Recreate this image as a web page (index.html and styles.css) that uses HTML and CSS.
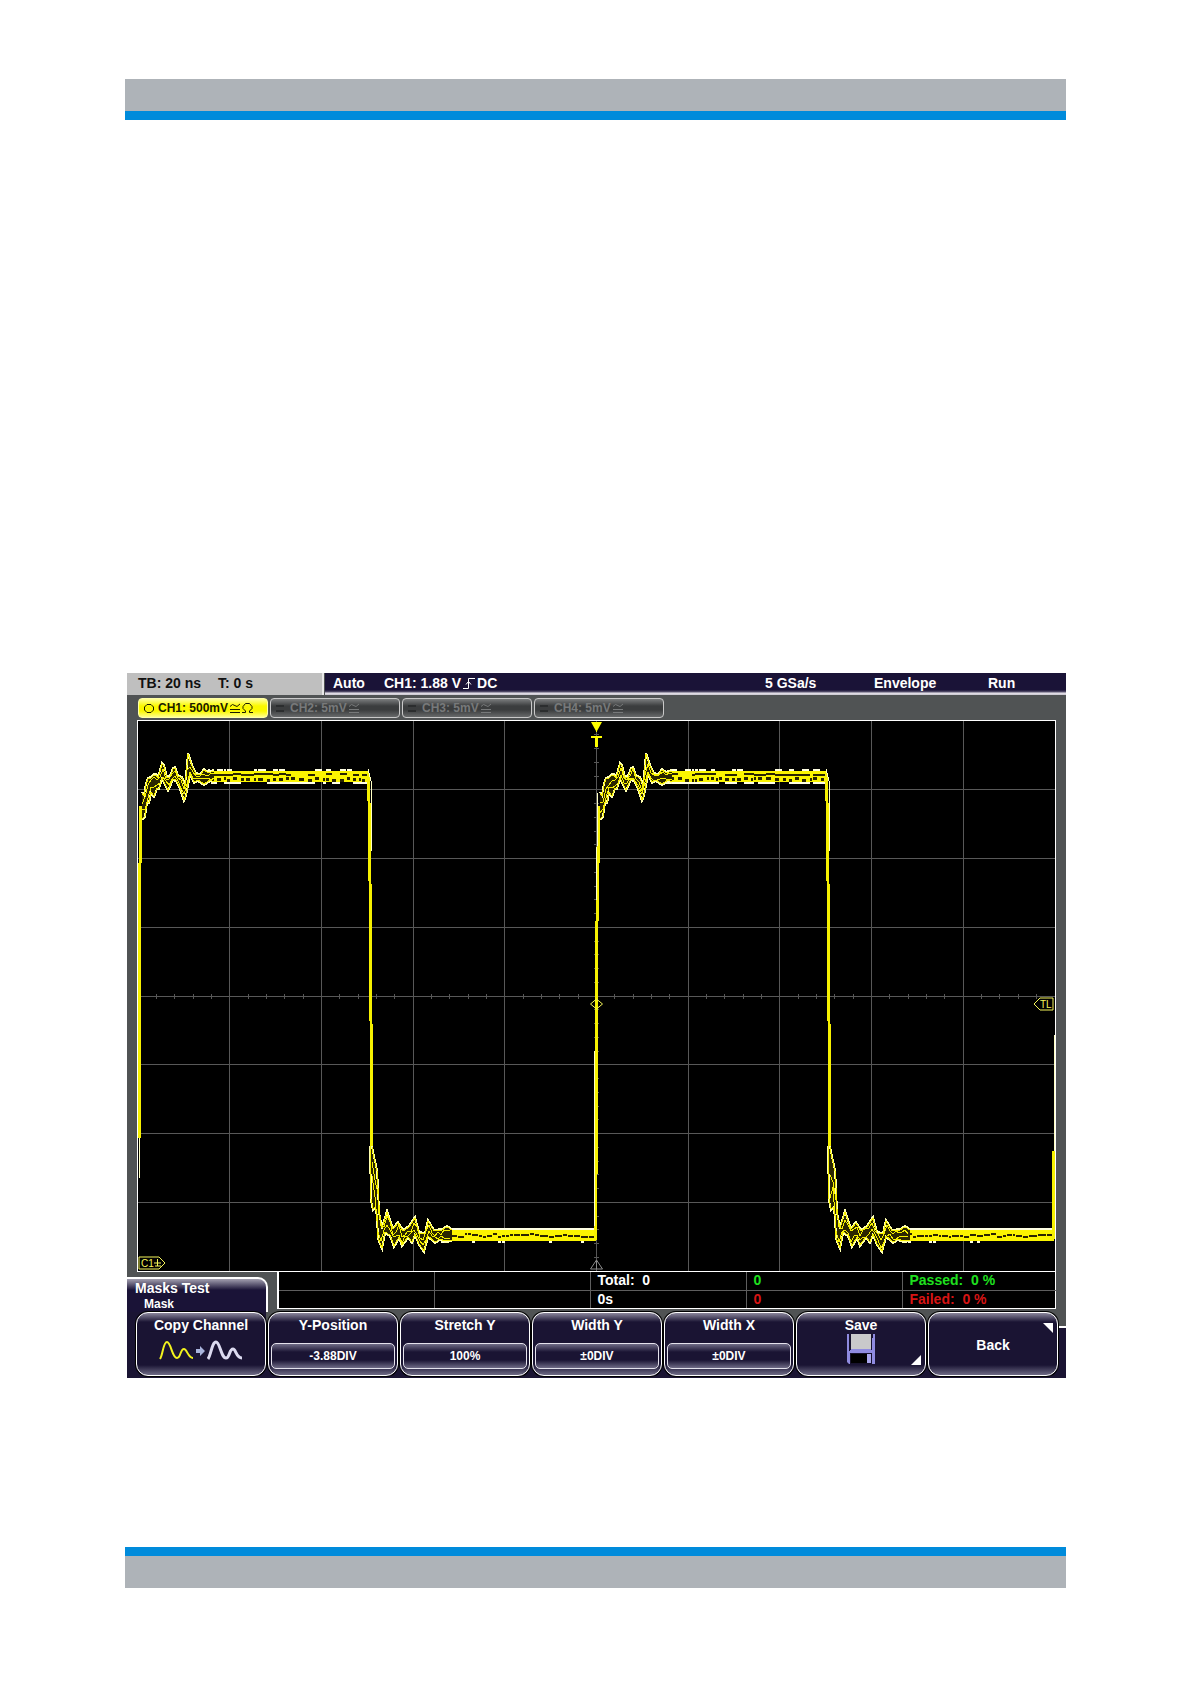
FILE: index.html
```html
<!DOCTYPE html>
<html lang="en">
  <head>
    <meta charset="UTF-8" />
    <meta name="viewport" content="width=device-width, initial-scale=1.0" />
    <title>Mask Test</title>
    <link rel="stylesheet" href="styles.css">
  </head>
  <body>
    <header class="band band-top"></header>

    <main class="scope">
      <!-- Status line -->
      <div class="status">
        <div class="timebase"><span>TB: 20 ns</span><span>T: 0 s</span></div>
        <div class="acquisition">
          <span>Auto</span>
          <span class="trigger">CH1: 1.88 V
            <svg width="12" height="11" viewBox="0 0 12 11"><path d="M0 10.500H5.500V.5H12M3 6.500l2.500-3 2.500 3" /></svg>
            DC</span>
          <span>5 GSa/s</span>
          <span>Envelope</span>
          <span>Run</span>
        </div>
      </div>

      <!-- Channel buttons -->
      <div class="channels">
        <button class="channel active">
          <svg width="10" height="9" viewBox="0 0 10 9"><path d="M3 .5h4l2.500 2.500v3L7 8.500H3L.5 6V3z" /></svg>
          <span>CH1: 500mV</span>
          <svg width="10" height="10" viewBox="0 0 10 10"><path d="M0 3.500L2.500 1.500 7 3.500 10 1M0 6.500h10M0 9.500h10" /></svg>
          <svg width="11" height="10" viewBox="0 0 11 10"><path d="M0 9.500h3.500V8L1 5.500v-2l2.500-3h4l2.500 3v2L7.500 8v1.500H11" /></svg>
        </button>
        <button class="channel">
          <svg class="off" width="8" height="7" viewBox="0 0 8 7"><path d="M0 1h8M0 6h8" /></svg>
          <span>CH2: 5mV</span>
          <svg width="10" height="10" viewBox="0 0 10 10"><path d="M0 3.500L2.500 1.500 7 3.500 10 1M0 6.500h10M0 9.500h10" /></svg>
        </button>
        <button class="channel">
          <svg class="off" width="8" height="7" viewBox="0 0 8 7"><path d="M0 1h8M0 6h8" /></svg>
          <span>CH3: 5mV</span>
          <svg width="10" height="10" viewBox="0 0 10 10"><path d="M0 3.500L2.500 1.500 7 3.500 10 1M0 6.500h10M0 9.500h10" /></svg>
        </button>
        <button class="channel">
          <svg class="off" width="8" height="7" viewBox="0 0 8 7"><path d="M0 1h8M0 6h8" /></svg>
          <span>CH4: 5mV</span>
          <svg width="10" height="10" viewBox="0 0 10 10"><path d="M0 3.500L2.500 1.500 7 3.500 10 1M0 6.500h10M0 9.500h10" /></svg>
        </button>
      </div>

      <!-- Waveform display -->
      <div class="display">
        <svg class="plot" viewBox="0 0 917 550">
          <g id="grid" shape-rendering="crispEdges"></g>
          <path class="zero" d="M458.500 539l6 9h-12zM458.500 539v9" />
          <g id="wave" shape-rendering="crispEdges"></g>
          <path class="mark-fill" d="M453 1h11l-5 9v1h-1v-1zM453 15h11v2h-4v9h-3v-9h-4z" />
          <path class="mark" d="M452.500 283l6-5 6 5-6 5z" />
          <path class="mark" d="M896 283l6-6h13v12h-13z" />
          <text class="mark-text" x="902" y="287">TL</text>
          <path class="mark" d="M1 536h20l6 6-6 6H1zM19.500 538v7M16 542h7M17 545h6" />
          <text class="mark-text" x="3" y="546">C1</text>
        </svg>
      </div>

      <!-- Mask statistics -->
      <div class="info">
        <div class="menu-title">
          <p>Masks Test</p>
          <p class="sub">Mask</p>
        </div>
        <table>
          <colgroup>
            <col class="wide" />
            <col class="wide" />
            <col class="wide" />
            <col class="wide" />
            <col />
          </colgroup>
          <tbody>
            <tr>
              <td></td>
              <td></td>
              <td class="first">Total:&nbsp; 0</td>
              <td class="passed">0</td>
              <td class="passed">Passed:&nbsp; 0 %</td>
            </tr>
            <tr>
              <td></td>
              <td></td>
              <td class="first">0s</td>
              <td class="failed">0</td>
              <td class="failed">Failed:&nbsp; 0 %</td>
            </tr>
          </tbody>
        </table>
      </div>

      <!-- Softkeys -->
      <div class="menu">
        <button class="softkey">
          <span>Copy Channel</span>
          <svg class="copy" width="84" height="22" viewBox="0 0 84 22">
            <path class="source" d="M1 19C4 15 4 2 8 2s5 16 10 16c4 0 3-9 7-9 3 0 4 9 9 9" />
            <path class="arrow" d="M37 9h4V6l5 5-5 5v-3h-4z" />
            <path class="target" d="M49 19C52 15 53 2 57 2s5 16 10 16c4 0 3-9 7-9 3 0 3 9 9 9" />
          </svg>
        </button>
        <button class="softkey"><span>Y-Position</span><span class="value">-3.88DIV</span></button>
        <button class="softkey"><span>Stretch Y</span><span class="value">100%</span></button>
        <button class="softkey"><span>Width Y</span><span class="value">±0DIV</span></button>
        <button class="softkey"><span>Width X</span><span class="value">±0DIV</span></button>
        <button class="softkey">
          <span>Save</span>
          <svg class="disk" width="28" height="30" viewBox="0 0 28 30">
            <path fill="#8f8be0" d="M0 0h28v30H2l-2-2z" />
            <path fill="#17122e" d="M2 0h2v17H2zM25 0h1v4h-1zM24 0h1v17h-1zM3 19h22v11H3z" />
            <path fill="#c9c9cb" d="M4 0h20v15H4z" />
            <path fill="#8f8be0" d="M3 16h22v3H3z" />
            <path fill="#000" d="M4 20h16v9H4z" />
            <path fill="#a9a6ee" d="M20 20h4v9h-4z" />
          </svg>
          <i class="corner bottom"></i>
        </button>
        <button class="softkey back"><span>Back</span><i class="corner top"></i></button>
      </div>
    </main>

    <footer class="band band-bottom"></footer>
    <script src="wave.js"></script>
  </body>
</html>
```
FILE: styles.css
```css
* {
  box-sizing: border-box;
}
body {
  margin: 0;
  padding: 79px 125px 96px;
  background-color: #fff;
  font-family: "Liberation Sans", Arial, sans-serif;
  font-size: 14px;
  font-weight: bold;
  line-height: 16px;
  color: #fff;
}
p {
  margin: 0;
}
button {
  margin: 0;
  padding: 0;
  font: inherit;
  color: inherit;
}
svg {
  display: block;
  fill: none;
}
.band {
  height: 41px;
  background-color: #aeb3b8;
}
.band-top {
  border-bottom: 9px solid #008bdb;
}
.band-bottom {
  border-top: 9px solid #008bdb;
}
.scope {
  margin: 553px 0 169px 2px;
  background-color: #505354;
}

/* status line */
.status {
  display: flex;
  height: 22px;
  gap: 1px;
}
.timebase {
  display: flex;
  align-items: center;
  gap: 17px;
  width: 197px;
  padding: 0 0 2px 11px;
  background-color: #bfbfbf;
  border-right: 2px solid #e8e8e8;
  color: #111;
}
.acquisition {
  flex: 1;
  display: grid;
  grid-template-columns: 51px 1fr 109px 114px 78px;
  align-items: center;
  padding: 0 0 2px 8px;
  background: linear-gradient(#1a1337 17px, #5b5571 19px, #e6e2ea 20px, #c9c6d0 22px);
}
.trigger {
  display: flex;
  align-items: center;
  gap: 2px;
}
.trigger svg {
  stroke: #fff;
}

/* channels */
.channels {
  display: flex;
  gap: 2px;
  padding: 3px 11px 2px;
}
.channel {
  display: flex;
  align-items: center;
  gap: 2px;
  width: 130px;
  height: 20px;
  padding-left: 5px;
  border: 1px solid #c9c9c9;
  border-radius: 4px;
  background: linear-gradient(#7b7d7e, #3b3d3e 7px, #3b3d3e 11px, #686a6b);
  color: #77797a;
  font-size: 12px;
}
.channel span {
  margin-left: 2px;
}
.channel svg {
  stroke: currentColor;
}
.channel .off {
  margin-right: 2px;
  stroke: #2b2d2e;
  stroke-width: 2;
}
.channel.active {
  border-color: #ffffa8;
  background: linear-gradient(#ffff9c, #fbf800 7px, #fbf800 12px, #ffff8a);
  color: #1a1a00;
}

/* display */
.display {
  margin: 0 10px;
  border: 1px solid #fff;
  background-color: #000;
}
.plot {
  width: 100%;
  height: auto;
  overflow: hidden;
}
#grid {
  stroke: #585858;
}
.zero {
  stroke: #8a8a8a;
}
.mark {
  stroke: #f4f45a;
}
.mark-fill {
  fill: #ff0;
}
.mark-text {
  fill: #f4f45a;
  font-size: 10px;
  font-weight: normal;
}
#wave .body {
  fill: #2b2600;
}
#wave .outer {
  stroke: #ffffb0;
  stroke-width: 2;
}
#wave .trace {
  stroke: #f6f000;
}
#wave .edge {
  stroke: #f6f000;
  stroke-width: 3;
}
#wave .edge-light {
  stroke: #ffffc4;
}
#wave .flat {
  fill: #fbf500;
}
#wave .light {
  fill: #ffffe4;
}
#wave .speck {
  fill: #2b2600;
}

/* statistics */
.info {
  display: flex;
  gap: 9px;
  height: 40px;
  padding-right: 10px;
}
.menu-title {
  width: 141px;
  margin-top: 5px;
  padding: 1px 0 0 8px;
  border-top: 2px solid #fff;
  border-right: 2px solid #fff;
  border-top-right-radius: 10px;
  background: linear-gradient(#a3a0b0, #1a1337 11px);
}
.menu-title .sub {
  padding-left: 9px;
  font-size: 12px;
}
table {
  flex: 1;
  height: 37px;
  table-layout: fixed;
  border-collapse: collapse;
  border: 1px solid #fff;
  border-top: 0;
  border-left: 2px solid #fff;
  background-color: #000;
}
.wide {
  width: 156px;
}
td {
  height: 18px;
  padding: 0 0 0 7px;
  border: 1px solid #5e5e5e;
  border-top: 0;
  line-height: 17px;
}
td:last-child {
  border-right-color: #fff;
}
tr:last-child td {
  border-bottom-color: #fff;
}
td.first {
  border-left: 1px solid #ccc;
}
.passed {
  color: #1fe01f;
}
.failed {
  color: #d81414;
}

/* softkeys */
.menu {
  display: grid;
  grid-template-columns: repeat(7, 1fr);
  gap: 2px;
  padding: 0 8px 2px 9px;
  background:
    linear-gradient(#1a1433, #1a1433) left / 139px 100% no-repeat,
    linear-gradient(#505354 14px, #fff 14px, #fff 16px, #1a1433 16px) right / 8px 100% no-repeat,
    linear-gradient(#505354 15px, #1a1433 17px);
}
.softkey {
  position: relative;
  display: flex;
  flex-direction: column;
  align-items: center;
  height: 64px;
  padding: 4px 2px 0;
  border: 1px solid #fff;
  border-radius: 12px;
  background: linear-gradient(#8b879c, #1a1433 9px, #1a1433 52px, #6f6b86);
  box-shadow: 0 0 0 1px #000;
}
.value {
  width: 100%;
  height: 26px;
  margin-top: 10px;
  border: 1px solid #e4e2ec;
  border-radius: 5px;
  background: linear-gradient(#6f6b86, #1a1433 8px, #1a1433 16px, #6f6b86);
  font-size: 12px;
  line-height: 24px;
}
.copy {
  margin-top: 7px;
  stroke-width: 2;
}
.copy .source {
  stroke: #f2f21e;
}
.copy .target {
  stroke: #dcdaf0;
  stroke-width: 3;
}
.copy .arrow {
  fill: #a9b4dc;
}
.disk {
  margin-top: 1px;
}
.back {
  justify-content: center;
  padding-top: 2px;
}
.corner {
  position: absolute;
  right: 4px;
  width: 10px;
  height: 10px;
  background-color: #fff;
}
.corner.bottom {
  bottom: 10px;
  clip-path: polygon(100% 0, 100% 100%, 0 100%);
}
.corner.top {
  top: 10px;
  clip-path: polygon(0 0, 100% 0, 100% 100%);
}
```
FILE: wave.js
```js
const W = 917;
const H = 550;
const PERIOD = 458;
const FALL = 230;

// ringing after the rising edge, x counted from the edge
const riseTop = [[4,71],[6,74],[8,62],[10,57],[13,56],[16,53],[18,53],[20,56],[24,42],[26,44],[29,56],[32,55],[35,47],[37,46],[40,54],[44,56],[47,64],[48,55],[50,32],[54,44],[58,52],[62,53],[66,48],[70,51],[76,49]];
const riseLow = [[4,99],[7,96],[9,82],[11,82],[13,72],[16,76],[19,68],[21,68],[24,58],[28,66],[30,70],[35,59],[38,60],[42,68],[46,80],[48,75],[52,54],[56,62],[60,60],[66,64],[72,60],[76,62]];
// ringing after the falling edge
const fallTop = [[4,425],[5,431],[9,449],[10,466],[11,492],[14,506],[19,490],[23,502],[25,507],[30,501],[35,509],[41,505],[47,496],[51,511],[57,512],[60,499],[66,509],[74,508],[79,505],[84,508]];
const fallLow = [[2,425],[3,479],[5,489],[7,487],[9,495],[10,518],[14,528],[17,512],[22,515],[26,526],[31,517],[34,525],[40,517],[44,522],[47,514],[51,524],[56,531],[60,516],[67,522],[72,519],[77,521],[84,520]];

let seed = 7;
function rnd() {
  seed = (seed * 16807) % 2147483647;
  return seed / 2147483647;
}

function path(points, x, dy, cls) {
  const d = points.map((p) => (x + p[0]) + " " + (p[1] + dy)).join("L");
  return `<path class="${cls}" d="M${d}"/>`;
}

function rect(x, y, w, h, cls) {
  return `<rect class="${cls}" x="${x}" y="${y}" width="${w}" height="${h}"/>`;
}

function yAt(points, x) {
  for (let i = 1; i < points.length; i++) {
    if (x <= points[i][0]) {
      const a = points[i - 1];
      const b = points[i];
      return a[1] + (b[1] - a[1]) * (x - a[0]) / (b[0] - a[0]);
    }
  }
  return points[points.length - 1][1];
}

function ringing(top, low, x) {
  let out = path(top.concat(low.slice().reverse()), x, 0, "body");
  out += path(top, x, 0, "outer") + path(low, x, 0, "outer");
  out += path(top, x, 1, "trace") + path(low, x, -1, "trace");
  // two inner traces that wander between the limits
  for (const base of [0.1, 0.5]) {
    const middle = [];
    for (let i = top[0][0]; i <= top[top.length - 1][0]; i += 3) {
      const part = base + rnd() * 0.4;
      middle.push([i, Math.round(yAt(top, i) * part + yAt(low, i) * (1 - part))]);
    }
    out += path(middle, x, 0, "trace");
  }
  return out;
}

function flat(x, end, y) {
  let out = rect(x, y + 2, end - x, 11, "flat");
  for (let i = x; i < end; ) {
    const w = Math.min(3 + Math.round(rnd() * 6), end - i);
    if (y > 300) {
      out += rect(i, y, w, 2, "light");
      if (rnd() > 0.8) out += rect(i, y + 13, 3, 2, "light");
      out += rect(i, y + 5 + Math.round(rnd() * 3), w - 1, 2, "speck");
    } else {
      if (rnd() > 0.5) out += rect(i, y, w - 1, 2, "light");
      if (rnd() > 0.3) out += rect(i, y + 13, w, 2, "light");
      if (rnd() > 0.3) out += rect(i, y + 4 + Math.round(rnd()), w, 2, "speck");
      out += rect(i, y + 8 + Math.round(rnd() * 2), Math.ceil(w / 2), 3, "speck");
    }
    i += w;
  }
  return out;
}

let grid = "";
for (let i = 1; i < 10; i++) grid += `<path d="M${Math.floor(i * W / 10) + 0.5} 0V${H}"/>`;
for (let i = 1; i < 8; i++) grid += `<path d="M0 ${Math.floor(i * H / 8) + 0.5}H${W}"/>`;
for (let i = 1; i < 50; i++) grid += `<path d="M${Math.floor(i * W / 50) + 0.5} 273v5"/>`;
for (let i = 1; i < 40; i++) grid += `<path d="M456 ${Math.floor(i * H / 40) + 0.5}h5"/>`;
document.getElementById("grid").innerHTML = grid;

let wave = "";
for (let x = 0; x < 900; x += PERIOD) {
  // rising edge
  if (x > 0) {
    wave += path([[-1, 520], [0, 460], [1, 200], [3, 85]], x, 0, "edge");
    wave += path([[-2, 505], [-2, 330]], x, 0, "edge-light");
    wave += path([[0, 180], [2, 72]], x, 0, "edge-light");
  } else {
    wave += path([[1, 457], [1, 417]], x, 0, "edge-light");
    wave += path([[1, 417], [1, 200], [3, 85]], x, 0, "edge");
  }
  wave += flat(x + 70, x + FALL, 48);
  wave += ringing(riseTop, riseLow, x);
  // falling edge
  wave += path([[0, 52], [1, 80], [2, 160], [3, 300], [4, 430]], x + FALL, 0, "edge");
  wave += path([[0, 48], [3, 60], [3, 130]], x + FALL, 0, "edge-light");
  wave += flat(x + FALL + 70, x + PERIOD - 1, 507);
  wave += ringing(fallTop, fallLow, x + FALL);
}
// start of the next rise at the right border
wave += path([[915, 520], [916, 430]], 0, 0, "edge");
wave += path([[916, 430], [916, 314]], 0, 0, "edge-light");
document.getElementById("wave").innerHTML = wave;
```
